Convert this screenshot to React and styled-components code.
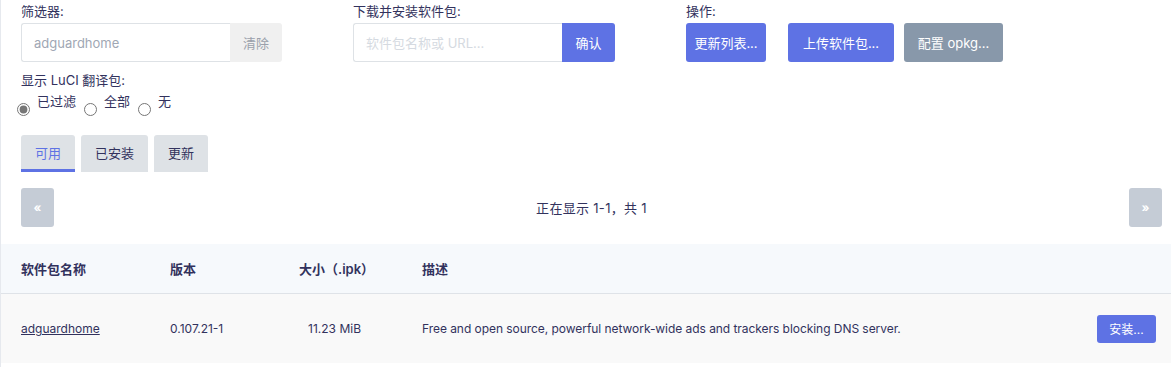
import React from 'react';
import styled, { createGlobalStyle } from 'styled-components';

const GlobalStyle = createGlobalStyle`
    html, body {
        margin: 0;
        padding: 0;
        background: #fff;
    }
    body {
        font-family: Inter, "Noto Sans CJK SC", "Noto Sans", sans-serif;
        font-size: 13px;
        color: #32325d;
    }
`;

const Page = styled.div`
    border-left: 1px solid #e6e9ee;
    min-height: 367px;
    box-sizing: border-box;
`;

const Controls = styled.div`
    display: grid;
    grid-template-columns: 332px 333px auto;
    padding: 2px 0 0 20px;
`;

const Field = styled.div`
    display: flex;
    flex-direction: column;
`;

const Label = styled.div`
    line-height: 18px;
    height: 18px;
    margin-bottom: 3px;
    white-space: nowrap;
`;

const InputGroup = styled.div`
    display: flex;
    height: 39px;
    width: ${(p) => p.width}px;
`;

const TextInput = styled.input`
    flex: 1;
    min-width: 0;
    box-sizing: border-box;
    height: 39px;
    border: 1px solid #dee2e6;
    border-right: none;
    border-radius: 3px 0 0 3px;
    padding: 0 12px;
    font-family: inherit;
    font-size: 13px;
    color: #32325d;
    outline: none;
    &::placeholder {
        color: ${(p) => p.$placeholder || '#a0a7b4'};
    }
`;

const AddonButton = styled.button`
    width: ${(p) => p.width}px;
    height: 39px;
    border: none;
    border-radius: 0 3px 3px 0;
    font-family: inherit;
    font-size: 13px;
    background: ${(p) => (p.$primary ? '#5e72e4' : '#f0f0f0')};
    color: ${(p) => (p.$primary ? '#fff' : '#9aa0ab')};
    padding: 0;
`;

const ButtonRow = styled.div`
    display: flex;
    gap: 10px;
`;

const Button = styled.button`
    width: ${(p) => (p.w ? `${p.w}px` : 'auto')};
    height: ${(p) => p.h || 39}px;
    padding: 0;
    margin-left: ${(p) => p.ml || 0}px;
    border: none;
    border-radius: 3px;
    font-family: inherit;
    font-size: ${(p) => p.fs || 13}px;
    color: #fff;
    background: ${(p) => (p.$muted ? '#8898aa' : '#5e72e4')};
    white-space: nowrap;
`;

const LangSection = styled.div`
    padding: 9px 0 0 20px;
`;

const RadioRow = styled.div`
    display: flex;
    align-items: flex-start;
    margin-top: 3px;
    margin-left: -4px;
`;

const RadioLabel = styled.label`
    display: flex;
    align-items: flex-start;
    margin-right: 8px;
    line-height: 18px;
    input {
        margin: 11px 7px 0 0;
        width: 13px;
        height: 13px;
        accent-color: #777;
    }
`;

const Tabs = styled.div`
    display: flex;
    gap: 6px;
    padding: 19px 0 0 20px;
`;

const Tab = styled.div`
    height: 37px;
    box-sizing: border-box;
    padding: 0 14px;
    display: flex;
    align-items: center;
    background: #dee2e6;
    border-radius: 3px 3px 0 0;
    border-bottom: 3px solid ${(p) => (p.$active ? '#5e72e4' : 'transparent')};
    color: ${(p) => (p.$active ? '#5e72e4' : '#32325d')};
`;

const Pager = styled.div`
    display: flex;
    align-items: center;
    justify-content: space-between;
    padding: 16px 9px 0 20px;
`;

const PagerButton = styled.div`
    width: 33px;
    height: 39px;
    border-radius: 3px;
    background: #c5ccd6;
    color: #fff;
    font-size: 12px;
    font-weight: 700;
    display: flex;
    align-items: center;
    justify-content: center;
`;

const PagerText = styled.div`
    font-size: 13px;
    letter-spacing: 0.3px;
`;

const Table = styled.div`
    margin-top: 17px;
`;

const Row = styled.div`
    display: grid;
    grid-template-columns: 149px 129px 62px 61px 1fr auto;
    align-items: center;
    padding: 0 15px 0 20px;
    height: ${(p) => p.h}px;
    background: ${(p) => p.bg};
    border-bottom: ${(p) => (p.$line ? '1px solid #dfe3e8' : 'none')};
    font-size: ${(p) => (p.$head ? 13 : 12)}px;
    font-weight: ${(p) => (p.$head ? 600 : 400)};
`;

const Cell = styled.div`
    white-space: nowrap;
    text-align: ${(p) => p.align || 'left'};
`;

const Description = styled(Cell)`
    letter-spacing: -0.05px;
`;

const PkgLink = styled.a`
    color: #32325d;
    text-decoration: underline;
`;

export default function App() {
    return (
        <>
            <GlobalStyle />
            <Page>
                <Controls>
                    <Field>
                        <Label>筛选器:</Label>
                        <InputGroup width={261}>
                            <TextInput placeholder="adguardhome" />
                            <AddonButton width={52}>清除</AddonButton>
                        </InputGroup>
                    </Field>
                    <Field>
                        <Label>下载并安装软件包:</Label>
                        <InputGroup width={262}>
                            <TextInput placeholder="软件包名称或 URL..." $placeholder="#d5dae1" />
                            <AddonButton width={53} $primary>确认</AddonButton>
                        </InputGroup>
                    </Field>
                    <Field>
                        <Label>操作:</Label>
                        <ButtonRow>
                            <Button w={80}>更新列表...</Button>
                            <Button w={106} ml={12}>上传软件包...</Button>
                            <Button w={99} $muted>配置 opkg...</Button>
                        </ButtonRow>
                    </Field>
                </Controls>

                <LangSection>
                    <Label>显示 LuCI 翻译包:</Label>
                    <RadioRow>
                        <RadioLabel><input type="radio" name="lang" defaultChecked />已过滤</RadioLabel>
                        <RadioLabel><input type="radio" name="lang" />全部</RadioLabel>
                        <RadioLabel><input type="radio" name="lang" />无</RadioLabel>
                    </RadioRow>
                </LangSection>

                <Tabs>
                    <Tab $active>可用</Tab>
                    <Tab>已安装</Tab>
                    <Tab>更新</Tab>
                </Tabs>

                <Pager>
                    <PagerButton>«</PagerButton>
                    <PagerText>正在显示 1-1，共 1</PagerText>
                    <PagerButton>»</PagerButton>
                </Pager>

                <Table>
                    <Row $head $line h={49} bg="#f6f9fc">
                        <Cell>软件包名称</Cell>
                        <Cell>版本</Cell>
                        <Cell align="right">大小（.ipk）</Cell>
                        <Cell />
                        <Cell>描述</Cell>
                        <Cell />
                    </Row>
                    <Row h={69} bg="#f9f9f9">
                        <Cell><PkgLink href="#">adguardhome</PkgLink></Cell>
                        <Cell>0.107.21-1</Cell>
                        <Cell align="right">11.23 MiB</Cell>
                        <Cell />
                        <Description>Free and open source, powerful network-wide ads and trackers blocking DNS server.</Description>
                        <Cell>
                            <Button h={28} w={59} fs={12}>安装...</Button>
                        </Cell>
                    </Row>
                </Table>
            </Page>
        </>
    );
}
